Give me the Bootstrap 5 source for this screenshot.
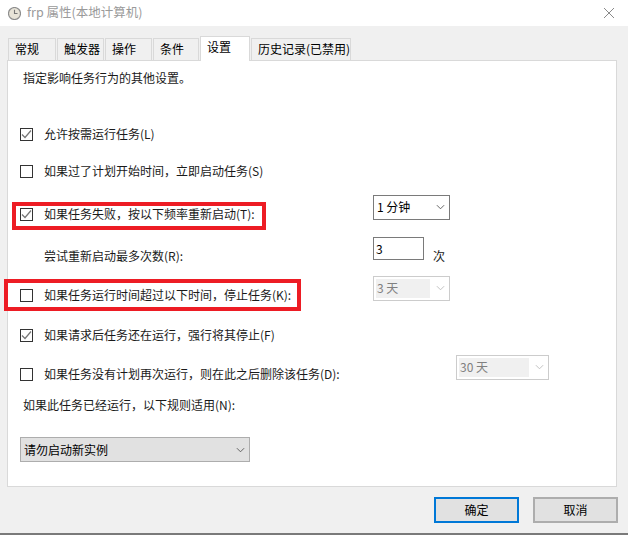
<!DOCTYPE html>
<html lang="zh-CN">
<head>
<meta charset="utf-8">
<title>frp 属性(本地计算机)</title>
<link rel="stylesheet" href="https://cdn.jsdelivr.net/npm/bootstrap@5.3.0/dist/css/bootstrap.min.css">
<style>
html,body{margin:0;height:535px;overflow:hidden;background:#f0f0f0}
body,.dlg,.dlg *{font-family:"Noto Sans CJK SC","Noto Sans",sans-serif;font-size:12px;line-height:16px;color:#1a1a1a}
.dlg{height:535px;border-bottom:2px solid #7a7a7a}
.dlg-title{height:26px;background:#fff;padding-left:8px;padding-right:14px}
.dlg-title span{color:#9a9a9a;font-size:12.5px;margin-left:6px;position:relative;top:-1px}
.tabbar{padding:10px 0 0 8px;height:34px;align-items:flex-end;border:0;flex-wrap:nowrap}
.tabbar .nav-link{height:22px;margin:0 1px 0 0;padding:2px 0 0 6px;border:1px solid #d9d9d9;border-bottom:0;border-radius:0;background:#f0f0f0;color:#000;text-align:left;white-space:nowrap}
.tabbar .nav-link.active{height:25px;padding:2px 0 0 6px;background:#fff;position:relative;z-index:2;margin-bottom:-1px;border-color:#d9d9d9}
.t1{width:48px}.t2{width:47px}.t3{width:47px}.t4{width:46px}.t5{width:50px}.t6{width:100px}
.panel-box{height:427px;margin:0 11px 0 7px;background:#fff;border:1px solid #d9d9d9;padding-left:12px}
.rw{height:24px;align-items:center}
.m5{margin-top:5px}.m32{margin-top:32px}.m13{margin-top:13px}.m19{margin-top:19px}.m18{margin-top:18px}.m15{margin-top:15px}.m16{margin-top:16px}.m7{margin-top:7px}.m20{margin-top:20px}
.form-check-input.chk{width:13px;height:13px;margin:0 11px 0 0;flex:none;border:1px solid #333;border-radius:0;background-color:#fff;box-shadow:none}
.form-check-input.chk:checked{background-color:#fff;border-color:#333;background-image:url("data:image/svg+xml,%3Csvg xmlns='http://www.w3.org/2000/svg' viewBox='0 0 13 13'%3E%3Cpath d='M2 6.5l3 3 6-7' fill='none' stroke='%23777' stroke-width='1.2'/%3E%3C/svg%3E");background-size:13px 13px}
.lbl{margin:0;white-space:nowrap}
.lab-w{width:353px;flex:none}
.lab-w2{width:436px;flex:none}
.sel.form-select{height:25px;padding:0 0 0 3px;border:1px solid #7a7a7a;border-radius:0;box-shadow:none;color:#000;background-color:#fff;
background-image:url("data:image/svg+xml,%3Csvg xmlns='http://www.w3.org/2000/svg' viewBox='0 0 10 6'%3E%3Cpath d='M1 1l4 4 4-4' fill='none' stroke='%23555' stroke-width='1'/%3E%3C/svg%3E");background-size:9px 6px;background-position:right 4px center;background-repeat:no-repeat;margin-top:-14px}
.sel-a{width:77px}
.sel.sel-off{border-color:#ccc;color:#808080;opacity:1;background-color:#fff;
background-image:url("data:image/svg+xml,%3Csvg xmlns='http://www.w3.org/2000/svg' viewBox='0 0 10 6'%3E%3Cpath d='M1 1l4 4 4-4' fill='none' stroke='%23bbb' stroke-width='1'/%3E%3C/svg%3E"),linear-gradient(#f0f0f0,#f0f0f0);background-size:9px 6px,54px 19px;background-position:right 4px center,2px 2px;background-repeat:no-repeat}
.sel-b.sel-off{background-size:9px 6px,70px 19px}
.sel-b{width:93px}
.sel.sel-c{width:230px;margin:0;height:25px;background-color:#e1e1e1;border-color:#adadad;padding-left:3px}
.num.form-control{width:51px;height:23px;padding:0 0 0 2px;margin-top:-16px;border:1px solid #7a7a7a;border-radius:0;box-shadow:none;color:#000;min-height:0}
.unit{margin:0 0 0 9px}
.ind{padding-left:24px}
.h-left{padding-left:3px}
.foot{padding:10px 10px 0 0;gap:14px}
.foot .btn{height:26px;width:85px;padding:0;border-radius:0;background:#e1e1e1;border:2px solid #adadad;color:#000}
.foot .btn.ok{border-color:#0078d7}
.flag{position:absolute;border:4px solid #ed1c24;pointer-events:none}
.f1{left:12px;top:202px;width:254px;height:28px}
.f2{left:4px;top:279px;width:297px;height:32px}
</style>
</head>
<body>
<div class="dlg position-relative">
  <div class="dlg-title d-flex align-items-center justify-content-between">
    <div class="d-flex align-items-center">
      <svg width="13" height="13" viewBox="0 0 13 13"><circle cx="6.5" cy="6.5" r="6" fill="#e8e4d8" stroke="#8e8e8e" stroke-width="1.2"/><path d="M6.5 2.8v3.7h3" fill="none" stroke="#777" stroke-width="1.1"/></svg>
      <span>frp 属性(本地计算机)</span>
    </div>
    <svg width="10" height="10" viewBox="0 0 10 10"><path d="M0 0l10 10M10 0L0 10" stroke="#8a8a8a" stroke-width="1"/></svg>
  </div>
  <ul class="nav nav-tabs tabbar">
    <li class="nav-item"><a class="nav-link t1" href="#">常规</a></li>
    <li class="nav-item"><a class="nav-link t2" href="#">触发器</a></li>
    <li class="nav-item"><a class="nav-link t3" href="#">操作</a></li>
    <li class="nav-item"><a class="nav-link t4" href="#">条件</a></li>
    <li class="nav-item"><a class="nav-link t5 active" href="#">设置</a></li>
    <li class="nav-item"><a class="nav-link t6" href="#">历史记录(已禁用)</a></li>
  </ul>
  <div class="panel-box">
    <div class="d-flex rw m5 h-left"><p class="lbl">指定影响任务行为的其他设置。</p></div>
    <div class="d-flex rw m32"><input class="form-check-input chk" type="checkbox" checked><label class="lbl">允许按需运行任务(L)</label></div>
    <div class="d-flex rw m13"><input class="form-check-input chk" type="checkbox"><label class="lbl">如果过了计划开始时间，立即启动任务(S)</label></div>
    <div class="d-flex rw m19"><div class="d-flex align-items-center lab-w"><input class="form-check-input chk" type="checkbox" checked><label class="lbl">如果任务失败，按以下频率重新启动(T):</label></div><select class="form-select sel sel-a"><option>1 分钟</option></select></div>
    <div class="d-flex rw m18"><div class="lab-w ind"><label class="lbl">尝试重新启动最多次数(R):</label></div><input class="form-control num" value="3"><span class="unit">次</span></div>
    <div class="d-flex rw m15"><div class="d-flex align-items-center lab-w"><input class="form-check-input chk" type="checkbox"><label class="lbl">如果任务运行时间超过以下时间，停止任务(K):</label></div><select class="form-select sel sel-a sel-off" disabled><option>3 天</option></select></div>
    <div class="d-flex rw m16"><input class="form-check-input chk" type="checkbox" checked><label class="lbl">如果请求后任务还在运行，强行将其停止(F)</label></div>
    <div class="d-flex rw m15"><div class="d-flex align-items-center lab-w2"><input class="form-check-input chk" type="checkbox"><label class="lbl">如果任务没有计划再次运行，则在此之后删除该任务(D):</label></div><select class="form-select sel sel-b sel-off" disabled><option>30 天</option></select></div>
    <div class="d-flex rw m7 h-left"><label class="lbl">如果此任务已经运行，以下规则适用(N):</label></div>
    <div class="d-flex m20"><select class="form-select sel sel-c"><option>请勿启动新实例</option></select></div>
  </div>
  <div class="d-flex justify-content-end foot">
    <button class="btn ok" type="button">确定</button>
    <button class="btn" type="button">取消</button>
  </div>
  <div class="flag f1"></div>
  <div class="flag f2"></div>
</div>
<script src="https://cdn.jsdelivr.net/npm/bootstrap@5.3.0/dist/js/bootstrap.bundle.min.js"></script>
</body>
</html>
